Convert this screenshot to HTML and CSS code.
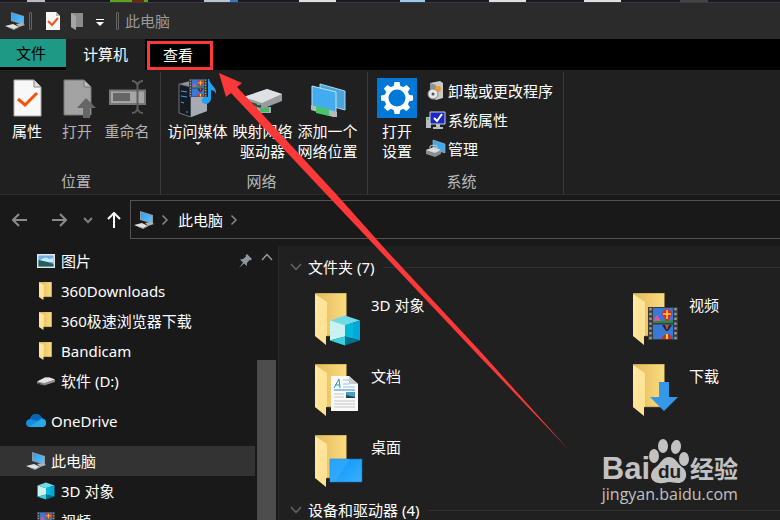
FILE: index.html
```html
<!DOCTYPE html>
<html lang="zh-CN">
<head>
  <meta charset="UTF-8" />
  <title>此电脑</title>
  <link rel="stylesheet" href="styles.css">
</head>
<body>

<!-- iconos compartidos -->
<svg class="sprite" width="0" height="0" aria-hidden="true">
  <defs>
    <linearGradient id="g-screen" x1="0" y1="0" x2="1" y2="1"><stop offset="0" stop-color="#2f9df0"/><stop offset="1" stop-color="#5cc4ff"/></linearGradient>
    <linearGradient id="g-back" x1="0" y1="0" x2="1" y2="0"><stop offset="0" stop-color="#e3b95a"/><stop offset="1" stop-color="#fbdc80"/></linearGradient>
    <linearGradient id="g-front" x1="0" y1="0" x2="1" y2="1"><stop offset="0" stop-color="#ffe9a6"/><stop offset="1" stop-color="#ffdf8c"/></linearGradient>
    <linearGradient id="g-desk" x1="0" y1="0" x2="1" y2="1"><stop offset="0" stop-color="#0a93f5"/><stop offset="1" stop-color="#39b0ff"/></linearGradient>
  </defs>
  <symbol id="pc" viewBox="0 0 20 18">
    <path d="M6 0 19 4V13L6 9z" fill="#8f9aa3"/>
    <path d="M7 1 18 5V12L7 8z" fill="url(#g-screen)"/>
    <path d="M11 12 17 11 20 13 14 15z" fill="#aeb4b8"/>
    <path d="M0 14 8 12 14 15 9 17.500 5 16z" fill="#dfe2e4"/>
    <path d="M5 16 9 17.500 14 15" fill="none" stroke="#8b9094"/>
  </symbol>
  <symbol id="folder" viewBox="0 0 32 52" preserveAspectRatio="none">
    <path d="M0 0H31.500V43H0z" fill="url(#g-back)" stroke="#8c743a" stroke-width=".6"/>
    <path d="M0 1 12 9V43H11V52L0 43z" fill="url(#g-front)"/>
  </symbol>
  <symbol id="cube" viewBox="0 0 32 32">
    <path d="M16 1 31 6 16 11 1 6z" fill="#6fdbe8"/>
    <path d="M1 6 16 11V22L1 26z" fill="#c9f2f3"/>
    <path d="M31 6 16 11V22L31 26z" fill="#00a7dc"/>
    <path d="M16 11 24 8V24L16 22z" fill="#00b9d6"/>
    <path d="M1 26 16 22V31z" fill="#35d3e0"/>
    <path d="M31 26 16 22V31z" fill="#00708c"/>
  </symbol>
  <symbol id="film" viewBox="0 0 30 33" preserveAspectRatio="none">
    <path d="M0 0H30V33H0z" fill="#3a3a3a"/>
    <path d="M2.500 1V33M27.500 1V33" stroke="#9c9c9c" stroke-width="2.400" stroke-dasharray="2.400 2.400"/>
    <path d="M5 1H25V16H5zM5 17.500H25V32H5z" fill="#3a78d8"/>
    <path d="M5 16V13L11 14 25 13V16z" fill="#1f8f45"/>
    <path d="M5 14 9 8 13 14z" fill="#e25593"/>
    <path d="M14 7a5 4.500 0 0 1 10 0L20 14H18z" fill="#d82a2a"/><path d="M15 7H23M19 3V12" stroke="#ffd22e" stroke-width="1.500"/>
    <path d="M14 18H24L20 24H18z" fill="#1d2a33"/><path d="M17 18 19 23 21 18" fill="#e8452c"/>
    <path d="M14 32a5 5 0 0 1 10 0z" fill="#d82a2a"/><path d="M19 27V32" stroke="#ffd22e" stroke-width="2"/>
  </symbol>
  <symbol id="drive" viewBox="0 0 36 18">
    <path d="M0 11 16 2H25L36 6V11L14 18 0 14z" fill="#8d8d8d"/>
    <path d="M0 10 16 2H25L36 6 14 13z" fill="#e4e4e4"/>
    <path d="M1 12 13 15V17L1 14z" fill="#454545"/>
    <path d="M8 14.500h3" stroke="#37d84c" stroke-width="2"/>
  </symbol>
  <symbol id="chev" viewBox="0 0 12 12"><path d="M1 3 6 8.500 11 3" fill="none" stroke="currentColor" stroke-width="1.500"/></symbol>
  <symbol id="chev-r" viewBox="0 0 8 12"><path d="M1.500 1.500 6 6 1.500 10.500" fill="none" stroke="currentColor" stroke-width="1.500"/></symbol>
</svg>

<div class="window">
  <div class="desktop-edge"></div>

  <header class="titlebar">
    <svg width="20" height="18"><use href="#pc"/></svg>
    <span class="grip"></span>
    <button class="quick quick-props" aria-label="属性">
      <svg width="16" height="18" viewBox="0 0 16 18"><path d="M1 0H11L15 4V18H1z" fill="#f7f7f7"/><path d="M11 0V4H15" fill="#bbb"/><path d="M3 9 7 13 13 6" fill="none" stroke="#f0531c" stroke-width="2"/></svg>
    </button>
    <button class="quick" aria-label="新建文件夹">
      <svg width="13" height="17" viewBox="0 0 13 17"><path d="M0 0H12V14H5V17L0 14z" fill="#8c8c8c"/><path d="M0 0 5 3V17L0 14z" fill="#a6a6a6"/></svg>
    </button>
    <button class="quick quick-more" aria-label="自定义快速访问工具栏">
      <svg width="8" height="7" viewBox="0 0 8 7"><path d="M0 0H8V1H0zM0 3H8L4 7z" fill="#fff"/></svg>
    </button>
    <span class="grip"></span>
    <span class="title">此电脑</span>
  </header>

  <nav class="tabs">
    <button class="tab tab-file">文件</button>
    <button class="tab tab-active">计算机</button>
    <button class="tab tab-marked">查看</button>
  </nav>

  <section class="ribbon">
    <div class="group group-location">
      <div class="tools">
        <button class="tool">
          <svg width="38" height="40" viewBox="0 0 38 40"><path d="M6 2H26L33 9V38H6z" fill="#f8f8f9" stroke="#aaa"/><path d="M26 2V9H33" fill="#ddd" stroke="#888"/><path d="M10 21 17 27 29 15" fill="none" stroke="#f4510b" stroke-width="3"/></svg>
          <span>属性</span>
        </button>
        <button class="tool tool-off">
          <svg width="38" height="40" viewBox="0 0 38 40"><path d="M6 2H26L33 9V37H6z" fill="#a3a3a3" stroke="#777"/><path d="M26 2V9H33" fill="#bbb" stroke="#777"/><path d="M28 20 38 30H32V40H25V30H19z" fill="#666"/></svg>
          <span>打开</span>
        </button>
        <button class="tool tool-off">
          <svg width="38" height="40" viewBox="0 0 38 40"><path d="M2 12.500H37V26H2z" fill="#a6a6a6" stroke="#777" stroke-width="2"/><path d="M5 15H22V23H5z" fill="#666"/><path d="M24 3Q28 3 29.500 7 31 3 35 3M29.500 6V33M24 35Q28 35 29.500 31 31 35 35 35" fill="none" stroke="#5e5e5e" stroke-width="2"/></svg>
          <span>重命名</span>
        </button>
      </div>
      <div class="group-name">位置</div>
    </div>

    <div class="group group-network">
      <div class="tools">
        <button class="tool">
          <svg width="40" height="40" viewBox="0 0 40 40">
            <path d="M1 6 12 3 29 7V33L13 39 1 35z" fill="#8f959c"/><path d="M1 6 13 9V39L1 35z" fill="#171b20" stroke="#6d737a"/><path d="M13 9 29 7V33L13 39z" fill="#a6abb1"/>
            <path d="M3 13 9 14M3 18 9 19M3 24 6 25M8 34h2" stroke="#2aaaff"/>
            <use href="#film" x="11" y="1" width="18" height="18"/>
            <path d="M31 1C32 7 39 9 38 16 37 13 35 12 33 12V21Q32 26 27 26 23 25 24 21 26 18 30 19V1z" fill="#24a0f2"/>
          </svg>
          <span>访问媒体</span>
          <svg class="caret" width="6" height="3" viewBox="0 0 6 3"><path d="M0 0H6L3 3z" fill="#ddd"/></svg>
        </button>
        <button class="tool">
          <svg width="40" height="40" viewBox="0 0 40 40"><path d="M14 29h14v6H14z" fill="#aaa"/><path d="M17 29h9v5h-9z" fill="#46b967"/><path d="M0 20 24 11 39 16V23L19 31 0 26z" fill="#989ba0"/><path d="M0 19 24 11 39 16 19 25z" fill="#dfe0e3"/><path d="M1 22 18 27V30L1 25z" fill="#444"/><path d="M14 26h3" stroke="#37e24c" stroke-width="2"/></svg>
          <span>映射网络<br>驱动器</span>
        </button>
        <button class="tool">
          <svg width="40" height="40" viewBox="0 0 40 40"><path d="M12 6 37 13V32L12 25z" fill="#48a5dd" stroke="#b4d8e9"/><path d="M4 8 28 14V35L4 28z" fill="#43abef" stroke="#c1e4f2"/><path d="M3 27 29 34V39L25 39 3 32z" fill="#b4b9bc"/><path d="M8 28 21 31V38L8 35z" fill="#48c66c"/></svg>
          <span>添加一个<br>网络位置</span>
        </button>
      </div>
      <div class="group-name">网络</div>
    </div>

    <div class="group group-system">
      <div class="tools">
        <button class="tool tool-settings">
          <svg width="40" height="40" viewBox="0 0 40 40"><path d="M0 0H40V40H0z" fill="#0078d7"/><circle cx="20" cy="20" r="10.500" fill="none" stroke="#fff" stroke-width="4"/><g fill="#fff"><path id="tooth" d="M17.500 4h5l1 5h-7z"/><use href="#tooth" transform="rotate(45 20 20)"/><use href="#tooth" transform="rotate(90 20 20)"/><use href="#tooth" transform="rotate(135 20 20)"/><use href="#tooth" transform="rotate(180 20 20)"/><use href="#tooth" transform="rotate(225 20 20)"/><use href="#tooth" transform="rotate(270 20 20)"/><use href="#tooth" transform="rotate(315 20 20)"/></g></svg>
          <span>打开<br>设置</span>
        </button>
        <div class="small-tools">
          <button class="small-tool">
            <svg width="20" height="20" viewBox="0 0 20 20"><path d="M4 2 14 0 17 2V17L10 19 4 15z" fill="#c9c9c9"/><path d="M4 2 10 4V19L4 17z" fill="#929292"/><circle cx="12" cy="8" r="3" fill="#f19a35"/><circle cx="7" cy="13" r="5" fill="#e4e8e9" stroke="#888"/><circle cx="7" cy="13" r="1.500" fill="#555"/></svg>
            <span>卸载或更改程序</span>
          </button>
          <button class="small-tool">
            <svg width="20" height="20" viewBox="0 0 20 20"><path d="M0 7H5V18H0z" fill="#b8babb"/><path d="M1 9h2" stroke="#3fd94c" stroke-width="2"/><path d="M4 2H19V14H4z" fill="#1a27c9" stroke="#cfcfcf"/><path d="M10 14h4v3h3v2H7v-2h3z" fill="#bdbdbd"/><path d="M8 8 11 11 16 4" fill="none" stroke="#fff" stroke-width="2"/></svg>
            <span>系统属性</span>
          </button>
          <button class="small-tool">
            <svg width="20" height="20" viewBox="0 0 20 20"><path d="M7 1 19 5V14L7 10z" fill="#3fa9ea" stroke="#a7bac5" stroke-width=".6"/><path d="M0 11 8 8 15 11V15L9 18 0 15z" fill="#888d91"/><path d="M0 11 8 8 15 11 9 14z" fill="#d6dadc"/><path d="M4 9V7L8 6 11 7V9" fill="none" stroke="#c6c9ca"/></svg>
            <span>管理</span>
          </button>
        </div>
      </div>
      <div class="group-name">系统</div>
    </div>
  </section>

  <div class="navbar">
    <button class="nav-btn" aria-label="后退"><svg width="16" height="14" viewBox="0 0 16 14"><path d="M7 1 1 7 7 13M1 7H15" fill="none" stroke="#8a8a8a" stroke-width="2"/></svg></button>
    <button class="nav-btn nav-forward" aria-label="前进"><svg width="16" height="14" viewBox="0 0 16 14"><path d="M9 1 15 7 9 13M15 7H1" fill="none" stroke="#8a8a8a" stroke-width="2"/></svg></button>
    <button class="nav-btn nav-recent" aria-label="最近浏览的位置"><svg width="10" height="8" viewBox="0 0 10 8"><path d="M1 2 5 6 9 2" fill="none" stroke="#808080" stroke-width="2"/></svg></button>
    <button class="nav-btn nav-up" aria-label="上移"><svg width="14" height="16" viewBox="0 0 14 16"><path d="M1 7 7 1 13 7M7 1V16" fill="none" stroke="#fff" stroke-width="2"/></svg></button>
    <div class="address">
      <svg width="20" height="18"><use href="#pc"/></svg>
      <svg class="crumb-sep" width="8" height="12"><use href="#chev-r"/></svg>
      <a href="#">此电脑</a>
      <svg class="crumb-sep" width="8" height="12"><use href="#chev-r"/></svg>
    </div>
  </div>

  <div class="content">
    <aside class="sidebar">
      <ul class="tree">
        <li class="sub"><svg width="18" height="14" viewBox="0 0 18 14"><path d="M0 0H18V14H0z" fill="#e6e6e6"/><path d="M1.500 1.500H16.500V12.500H1.500z" fill="#6caee9"/><path d="M2 7Q9 1 12 5L16 4V8H2z" fill="#cce6f7"/><path d="M1.500 6Q8 7 16.500 10V12.500H1.500z" fill="#24605b"/></svg><a href="#">图片</a>
          <svg class="pin" width="13" height="14" viewBox="0 0 13 14"><path d="M8 0 13 5 11.500 6.500 10.500 6 8 9 8 12 5 9.500 0 14 4 8.500 1 5.500 4 5 7 2.500 6.500 1.500z" fill="#8b96a0"/></svg></li>
        <li class="sub"><svg width="18" height="18" viewBox="-2 0 18 18"><use href="#folder" width="13" height="18"/></svg><a href="#">360Downloads</a></li>
        <li class="sub"><svg width="18" height="18" viewBox="-2 0 18 18"><use href="#folder" width="13" height="18"/></svg><a href="#">360极速浏览器下载</a></li>
        <li class="sub"><svg width="18" height="18" viewBox="-2 0 18 18"><use href="#folder" width="13" height="18"/></svg><a href="#">Bandicam</a></li>
        <li class="sub"><svg width="18" height="10"><use href="#drive"/></svg><a href="#">软件 (D:)</a></li>
        <li class="root onedrive"><svg width="20" height="14" viewBox="0 0 20 14"><path d="M3 13Q0 12 0 9 0 6 4 5 6 0 10 0 14 0 16 4 20 5 20 9 20 13 16 13z" fill="#1490df"/><path d="M4 5Q6 0 10 0 14 0 16 4L12 7z" fill="#0364b8"/><path d="M3 13 15 5Q20 5 20 9 20 13 16 13z" fill="#28a8ea"/></svg><a href="#">OneDrive</a></li>
        <li class="root selected"><svg width="20" height="18"><use href="#pc"/></svg><a href="#">此电脑</a></li>
        <li class="sub"><svg width="18" height="18"><use href="#cube"/></svg><a href="#">3D 对象</a></li>
        <li class="sub"><svg width="18" height="18"><use href="#film"/></svg><a href="#">视频</a></li>
      </ul>
      <div class="scroll">
        <svg class="scroll-up" width="12" height="12"><use href="#chev"/></svg>
        <div class="thumb"></div>
      </div>
    </aside>

    <main class="files">
      <h2 class="section-name"><svg width="12" height="12"><use href="#chev"/></svg>文件夹 (7)</h2>
      <div class="grid">
        <a class="item" href="#"><svg width="48" height="54" viewBox="0 0 48 54"><use href="#folder" width="32" height="52"/><use href="#cube" x="14" y="21" width="32" height="33"/></svg><span>3D 对象</span></a>
        <a class="item" href="#"><svg width="48" height="54" viewBox="0 0 48 54"><use href="#folder" width="32" height="52"/><use href="#film" x="15" y="14" width="30" height="33"/></svg><span>视频</span></a>
        <a class="item" href="#"><svg width="48" height="54" viewBox="0 0 48 54"><use href="#folder" width="32" height="52"/><path d="M16 12H34L43 20V47H16z" fill="#fafafa"/><path d="M34 12V20H43z" fill="#c9c9c9"/><path d="M19 24 24 15 25 24M20 21H25M19 26H40" fill="none" stroke="#2f8fce"/><path d="M28 16H34M28 20H34M28 23H40" stroke="#8fc4e6"/><path d="M19 30H29M19 33H29M19 37H40M19 40H40M19 43H40" stroke="#c4c4c4"/><path d="M31 28H40V34H31z" fill="#4d9bc4"/><path d="M31 31 40 33V34H31z" fill="#1e4c4a"/></svg><span>文档</span></a>
        <a class="item" href="#"><svg width="48" height="54" viewBox="0 0 48 54"><use href="#folder" width="32" height="52"/><path d="M26 18H36V33H45L31 47 17 33H26z" fill="#3597e8"/></svg><span>下载</span></a>
        <a class="item" href="#"><svg width="48" height="54" viewBox="0 0 48 54"><use href="#folder" width="32" height="52"/><path d="M15 24H47V47H15z" fill="url(#g-desk)" stroke="#1473c0" stroke-width=".6"/><path d="M15 24H35L20 47H15z" fill="#38adff" opacity=".6"/></svg><span>桌面</span></a>
      </div>
      <h2 class="section-name"><svg width="12" height="12"><use href="#chev"/></svg>设备和驱动器 (4)</h2>
    </main>
  </div>

  <!-- flecha que señala la pestaña -->
  <svg class="arrow" width="350" height="377" viewBox="219 73 350 377" aria-hidden="true"><path d="M219 73 242 83 237 87 337 195 386 250 480 351 568 449 480 357 379 250 327 195 231 93 226 97z" fill="#fd3838"/></svg>

  <div class="watermark">
    <div class="brand">
      <span class="bai">Bai</span>
      <span class="paw">
        <svg width="42" height="46" viewBox="0 0 42 46" aria-hidden="true"><g fill="#c2c2c2"><ellipse cx="6" cy="18" rx="5" ry="7"/><ellipse cx="15" cy="8" rx="5" ry="7"/><ellipse cx="28" cy="9" rx="5" ry="7" transform="rotate(10 28 9)"/><ellipse cx="36" cy="21" rx="5" ry="7"/><path d="M21 19C27 19 29 25 34 29 41 34 39 45 30 45 26 45 24 44 21 44 18 44 15 46 11 45 1 44 1 34 8 29 13 25 15 19 21 19z"/></g></svg>
        <span class="du">du</span>
      </span>
      <span class="jingyan">经验</span>
    </div>
    <div class="site">jingyan.baidu.com</div>
  </div>
</div>

</body>
</html>
```
FILE: styles.css
```css
* {
  box-sizing: border-box;
}

body {
  margin: 0;
  background: #202020;
  color: #fff;
  font-family: "Noto Sans", "Noto Sans CJK SC", sans-serif;
  font-size: 15px;
  line-height: 20px;
}

button {
  margin: 0;
  padding: 0;
  border: none;
  background: none;
  color: inherit;
  font: inherit;
  cursor: pointer;
}

a {
  color: inherit;
  text-decoration: none;
}

svg {
  display: block;
  flex-shrink: 0;
}

.sprite {
  position: absolute;
}

.window {
  position: relative;
  display: flex;
  flex-direction: column;
  height: 100vh;
  overflow: hidden;
}

/* franja del escritorio detrás de la ventana */
.desktop-edge {
  height: 2px;
  flex-shrink: 0;
  background: linear-gradient(to right,
    #1b1a22 27px, #b9bcc0 27px 45px, #1b1a22 45px 110px,
    #5ea321 110px 132px, #6b2a10 132px 144px, #5ea321 144px 148px, #1b1a22 148px 204px,
    #b8c4cf 204px 230px, #3478c8 230px 238px, #1b1a22 238px 299px,
    #e0e0e0 299px 336px, #1b1a22 336px 400px, #9accec 400px 425px, #1b1a22 425px 489px,
    #e0e0e0 489px 526px, #1b1a22 526px 584px, #e0e0e0 584px 621px, #1b1a22 621px 680px,
    #444 680px 708px, #1b1a22 708px);
}

/* barra de título */
.titlebar {
  display: flex;
  align-items: center;
  height: 37px;
  flex-shrink: 0;
  padding-left: 5px;
  background: #2b2b2b;
  border-top: 1px solid #3a3a3e;
}

.grip {
  width: 3px;
  height: 18px;
  margin-left: 4px;
  border: 1px solid #666;
  border-radius: 1px;
}

.quick {
  margin-left: 10px;
}

.quick-props {
  margin-left: 13px;
}

.quick-more {
  margin: 2px 8px 0 12px;
}

.title {
  margin-left: 6px;
  color: #999;
}

/* pestañas */
.tabs {
  display: flex;
  height: 31px;
  flex-shrink: 0;
  background: #000;
}

.tab {
  height: 31px;
  padding-bottom: 1px;
}

.tab-file {
  width: 66px;
  height: 28px;
  padding-right: 4px;
  background: #1e9985;
  color: #000;
}

.tab-active {
  width: 79px;
  background: #202020;
}

.tab-marked {
  width: 66px;
  height: 29px;
  margin: 2px 0 0 2px;
  padding-right: 4px;
  border: 3px solid #fd3838;
}

/* cinta */
.ribbon {
  display: flex;
  height: 125px;
  flex-shrink: 0;
  padding-top: 2px;
  background: #202020;
  border-bottom: 1px solid #2d2d2d;
}

.group {
  display: flex;
  flex-direction: column;
  justify-content: space-between;
  padding: 6px 8px 3px 2px;
  border-right: 1px solid #3c3c3c;
}

.group-network {
  padding: 6px 7px 3px 4px;
}

.group-system {
  padding: 6px 10px 3px 4px;
}

.tools {
  display: flex;
}

.tool {
  display: flex;
  flex-direction: column;
  align-items: center;
  width: 50px;
  gap: 3px;
  white-space: nowrap;
}

.tool-off {
  color: #b4b4b4;
}

.group-network .tool {
  width: 65px;
}

.caret {
  margin-top: -2px;
}

.small-tools {
  display: flex;
  flex-direction: column;
  gap: 9px;
  padding: 3px 0 0 4px;
}

.small-tool {
  display: flex;
  align-items: center;
  gap: 2px;
}

.group-name {
  padding-right: 2px;
  text-align: center;
  color: #b8b8b8;
}

/* navegación */
.navbar {
  display: flex;
  align-items: center;
  height: 51px;
  flex-shrink: 0;
  padding: 0 0 2px 12px;
  background: #191919;
}

.nav-forward {
  margin-left: 23px;
}

.nav-recent {
  margin-left: 16px;
}

.nav-up {
  margin: 0 9px 0 14px;
}

.address {
  display: flex;
  align-items: center;
  flex: 1;
  height: 39px;
  padding-left: 3px;
  border: 1px solid #535353;
  border-right: none;
}

.crumb-sep {
  margin: 0 9px 0 7px;
  color: #888;
}

/* contenido */
.content {
  display: flex;
  flex: 1;
  min-height: 0;
}

.sidebar {
  display: flex;
  width: 279px;
  flex-shrink: 0;
  background: #191919;
  border-right: 1px solid #2b2b2b;
}

.tree {
  flex: 1;
  margin: 0;
  padding: 0;
  list-style: none;
  overflow: hidden;
}

.tree li {
  display: flex;
  align-items: center;
  height: 30px;
}

.tree .sub {
  gap: 6px;
  padding-left: 37px;
}

.tree .root {
  gap: 5px;
  padding-left: 26px;
}

.tree .onedrive {
  margin: 10px 0;
}

.tree .selected {
  background: #333;
}

.pin {
  margin: 0 3px 0 auto;
}

.scroll {
  display: flex;
  flex-direction: column;
  align-items: center;
  width: 23px;
  padding: 5px 2px 0 2px;
}

.scroll-up {
  color: #999;
  transform: rotate(180deg);
}

.thumb {
  width: 19px;
  flex: 1;
  margin-top: 97px;
  background: #4d4d4d;
}

.files {
  flex: 1;
  min-width: 0;
  padding: 11px 0 0 11px;
  overflow: hidden;
  background: #202020;
}

.section-name {
  display: flex;
  align-items: center;
  gap: 6px;
  margin: 0;
  font-size: 15px;
  font-weight: normal;
}

.section-name svg {
  color: #666;
}

.section-name::after {
  content: "";
  flex: 1;
  height: 1px;
  margin-left: 3px;
  background: #303030;
}

.grid {
  display: grid;
  grid-template-columns: repeat(2, 318px);
  grid-auto-rows: 54px;
  gap: 17px 0;
  padding: 16px 0 11px 25px;
}

.item {
  display: flex;
  gap: 8px;
}

.item span {
  padding-top: 2px;
}

/* superpuestos */
.arrow {
  position: absolute;
  top: 73px;
  left: 219px;
}

.watermark {
  position: absolute;
  right: 42px;
  bottom: 16px;
  color: #c2c2c2;
}

.brand {
  display: flex;
  align-items: flex-end;
  height: 46px;
  font-weight: bold;
}

.bai {
  font-family: "Liberation Sans", sans-serif;
  font-size: 31px;
  line-height: 30px;
}

.paw {
  position: relative;
  margin-left: -2px;
}

.du {
  position: absolute;
  left: 10px;
  bottom: 2px;
  color: #202020;
  font-family: "Liberation Sans", sans-serif;
  font-size: 19px;
}

.jingyan {
  font-size: 24px;
  line-height: 30px;
}

.site {
  font-family: "Open Sans", sans-serif;
  font-size: 16px;
}
```
